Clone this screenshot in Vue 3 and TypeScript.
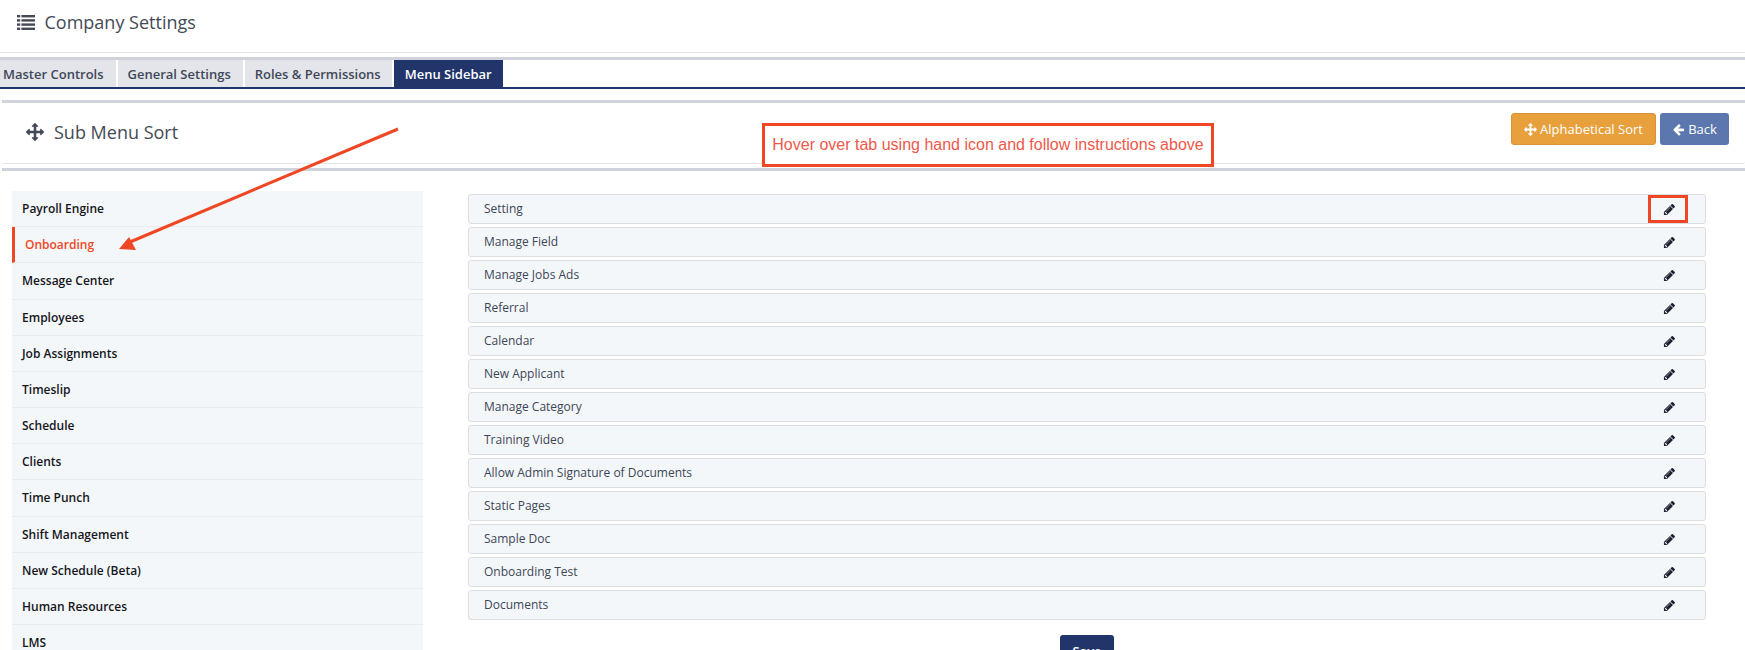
<script setup lang="ts">
const tabs: string[] = ['Master Controls', 'General Settings', 'Roles & Permissions', 'Menu Sidebar']
const menu: string[] = ['Payroll Engine', 'Onboarding', 'Message Center', 'Employees', 'Job Assignments', 'Timeslip', 'Schedule', 'Clients', 'Time Punch', 'Shift Management', 'New Schedule (Beta)', 'Human Resources', 'LMS']
const subs: string[] = ['Setting', 'Manage Field', 'Manage Jobs Ads', 'Referral', 'Calendar', 'New Applicant', 'Manage Category', 'Training Video', 'Allow Admin Signature of Documents', 'Static Pages', 'Sample Doc', 'Onboarding Test', 'Documents']
const movePath = 'M1792 896q0 26-19 45l-256 256q-19 19-45 19t-45-19-19-45v-128h-384v384h128q26 0 45 19t19 45-19 45l-256 256q-19 19-45 19t-45-19l-256-256q-19-19-19-45t19-45 45-19h128v-384h-384v128q0 26-19 45t-45 19-45-19l-256-256q-19-19-19-45t19-45l256-256q19-19 45-19t45 19 19 45v128h384v-384h-128q-26 0-45-19t-19-45 19-45l256-256q19-19 45-19t45 19l256 256q19 19 19 45t-19 45-45 19h-128v384h384v-128q0-26 19-45t45-19 45 19l256 256q19 19 19 45z'
const pencilPath = 'M491 1536l91-91-235-235-91 91v107h128v128h107zm523-928q0-22-22-22-10 0-17 7l-542 542q-7 7-7 17 0 22 22 22 10 0 17-7l542-542q7-7 7-17zm-54-192l416 416-832 832h-416v-416zm683 96q0 53-37 90l-166 166-416-416 166-165q36-38 90-38 53 0 91 38l235 234q37 39 37 91z'
const backPath = 'M1664 896v128q0 53-32.5 90.5t-84.5 37.5h-704l293 294q38 36 38 90t-38 90l-75 76q-37 37-90 37-52 0-91-37l-651-652q-37-37-37-90 0-52 37-91l651-650q38-38 91-38 52 0 90 38l75 74q38 38 38 91t-38 91l-293 293h704q52 0 84.5 37.5t32.5 90.5z'
</script>

<template>
  <div class="page">
    <header class="top">
      <svg class="list-icon" viewBox="0 0 18 15" width="18" height="15" fill="#444a55">
        <rect x="0" y="0" width="3.2" height="2.4" /><rect x="4.4" y="0" width="13.6" height="2.4" />
        <rect x="0" y="4.2" width="3.2" height="2.4" /><rect x="4.4" y="4.2" width="13.6" height="2.4" />
        <rect x="0" y="8.4" width="3.2" height="2.4" /><rect x="4.4" y="8.4" width="13.6" height="2.4" />
        <rect x="0" y="12.6" width="3.2" height="2.4" /><rect x="4.4" y="12.6" width="13.6" height="2.4" />
      </svg>
      <span>Company Settings</span>
    </header>

    <nav class="tabs">
      <a v-for="(t, i) in tabs" :key="t" class="tab" :class="{ active: i === 3 }">{{ t }}</a>
    </nav>

    <section class="panel">
      <div class="panel-head">
        <div class="panel-title">
          <svg viewBox="0 0 1792 1792" width="18" height="18" fill="#444a55"><path :d="movePath" /></svg>
          <span>Sub Menu Sort</span>
        </div>
        <div class="actions">
          <button class="btn orange">
            <svg viewBox="0 0 1792 1792" width="13" height="13" fill="#fff"><path :d="movePath" /></svg>
            Alphabetical Sort
          </button>
          <button class="btn blue">
            <svg viewBox="0 0 1792 1792" width="13" height="13" fill="#fff"><path :d="backPath" /></svg>
            Back
          </button>
        </div>
      </div>

      <div class="content">
        <ul class="menu">
          <li v-for="(m, i) in menu" :key="m" class="menu-row" :class="{ current: i === 1 }">{{ m }}</li>
        </ul>
        <div class="right">
          <ul class="subs">
            <li v-for="s in subs" :key="s" class="sub-row">
              <span class="sub-label">{{ s }}</span>
              <svg viewBox="0 0 1792 1792" width="13" height="13" fill="#1b2030"><path :d="pencilPath" /></svg>
            </li>
          </ul>
          <div class="save-wrap"><button class="save">Save</button></div>
        </div>
      </div>
    </section>

    <!-- Annotations drawn on top of the screenshot -->
    <div class="note">Hover over tab using hand icon and follow instructions above</div>
    <div class="pencil-mark"></div>
    <svg class="arrow" width="400" height="270" viewBox="0 0 400 270">
      <line x1="398" y1="129" x2="130" y2="242" stroke="#ef4723" stroke-width="3" />
      <polygon points="119,249 129,237 136,250" fill="#ef4723" />
    </svg>
  </div>
</template>

<style scoped>
.page {
  position: relative;
  width: 1745px;
  height: 650px;
  overflow: hidden;
  background: #fff;
  font-family: "Open Sans", sans-serif;
  color: #444a55;
}
.top {
  box-sizing: border-box;
  height: 53px;
  padding: 0 0 8px 17px;
  display: flex;
  align-items: center;
  gap: 9.5px;
  font-size: 18px;
  border-bottom: 1px solid #e6e6e8;
}
.tabs {
  margin-top: 4px;
  height: 32px;
  box-sizing: border-box;
  border-top: 3px solid #d0d3dc;
  border-bottom: 2px solid #22356b;
  display: flex;
  gap: 2px;
}
.tab {
  display: flex;
  align-items: center;
  padding: 0 11px 0 10px;
  background: #e3e5ea;
  color: #3e4859;
  font-size: 13px;
  font-weight: 600;
}
.tab:first-child {
  margin-left: -7px;
  padding-right: 12px;
}
.tab:nth-child(2) {
  padding-right: 12px;
}
.tab.active {
  background: #22356b;
  color: #fff;
  padding: 0 11px;
}
.panel {
  margin: 11px 0 0 2px;
}
.panel-head {
  box-sizing: border-box;
  height: 64px;
  border-top: 3px solid #d0d3dc;
  border-bottom: 1px solid #e6e6e8;
  display: flex;
  align-items: center;
  justify-content: space-between;
  padding: 0 16px 0 24px;
  border-radius: 0 0 3px 3px;
}
.panel-title {
  display: flex;
  align-items: center;
  gap: 10px;
  font-size: 18px;
  padding-bottom: 2px;
}
.actions {
  display: flex;
  gap: 4px;
  margin-bottom: 8px;
}
.btn {
  height: 32px;
  border: 1px solid transparent;
  border-radius: 3px;
  color: #fff;
  font-family: inherit;
  font-size: 13px;
  display: flex;
  align-items: center;
  justify-content: center;
  gap: 3px;
  padding: 0;
}
.orange {
  width: 145px;
  background: #e7a03c;
  border-color: #d9923a;
}
.blue {
  width: 69px;
  background: #5b77ad;
}
.content {
  margin-top: 4px;
  border-top: 3px solid #d0d3dc;
  display: flex;
  padding: 20px 0 0 10px;
  align-items: flex-start;
}
.menu, .subs {
  list-style: none;
  margin: 0;
  padding: 0;
}
.menu {
  width: 411px;
  background: #f4f7fa;
}
.menu-row {
  box-sizing: border-box;
  height: 36.18px;
  display: flex;
  align-items: center;
  padding-left: 10px;
  border-bottom: 1px solid #e9ebee;
  font-size: 12px;
  font-weight: 600;
  color: #14161a;
}
.menu-row.current {
  color: #ef4723;
  border-left: 3px solid #ef4723;
}
.right {
  margin: 3px 0 0 45px;
  width: 1238px;
}
.subs {
  display: flex;
  flex-direction: column;
  gap: 3px;
}
.sub-row {
  box-sizing: border-box;
  height: 30px;
  display: flex;
  align-items: center;
  justify-content: space-between;
  padding: 0 29px 0 15px;
  background: #f4f7fa;
  border: 1px solid #dcdee1;
  border-radius: 3px;
  font-size: 12px;
  color: #3c4656;
}
.sub-label {
  padding-bottom: 1px;
}
.save-wrap {
  display: flex;
  justify-content: center;
  margin-top: 15px;
}
.save {
  width: 54px;
  height: 32px;
  background: #22356b;
  color: #fff;
  border: 0;
  border-radius: 3px;
  font-family: inherit;
  font-size: 13px;
  font-weight: 600;
  padding: 0;
}
.note {
  position: absolute;
  left: 762px;
  top: 123px;
  box-sizing: border-box;
  width: 452px;
  height: 44px;
  display: flex;
  align-items: center;
  justify-content: center;
  background: #fff;
  border: 3px solid #ef4723;
  font-family: "Liberation Sans", Arial, sans-serif;
  font-size: 16px;
  color: #f0584a;
  white-space: nowrap;
}
.pencil-mark {
  position: absolute;
  left: 1648px;
  top: 195px;
  width: 40px;
  height: 28px;
  box-sizing: border-box;
  border: 3px solid #ef4723;
}
.arrow {
  position: absolute;
  left: 0;
  top: 0;
}
</style>

<style>
html, body {
  margin: 0;
  overflow: hidden;
  background: #fff;
}
</style>
